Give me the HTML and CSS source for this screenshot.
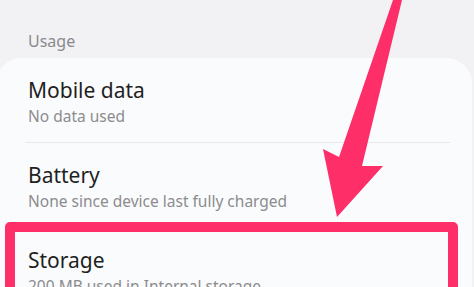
FILE: index.html
```html
<!DOCTYPE html>
<html>
<head>
<meta charset="utf-8">
<link rel="stylesheet" href="styles.css">
</head>
<body>
<div class="page">
  <div class="section-label">Usage</div>
  <div class="card">
    <div class="row">
      <div class="title">Mobile data</div>
      <div class="subtitle">No data used</div>
    </div>
    <div class="divider"></div>
    <div class="row">
      <div class="title">Battery</div>
      <div class="subtitle">None since device last fully charged</div>
    </div>
    <div class="divider"></div>
    <div class="row">
      <div class="title">Storage</div>
      <div class="subtitle">200 MB used in Internal storage</div>
    </div>
  </div>
  <div class="highlight"></div>
  <svg class="arrow" width="474" height="287" viewBox="0 0 474 287">
    <polygon points="393,0 402,0 362,166 383,166 337,217 323,149 339,157" fill="#fd2e68"/>
  </svg>
</div>
</body>
</html>
```
FILE: styles.css
```css
html, body {
  margin: 0;
  padding: 0;
  background: #f2f2f4;
  overflow: hidden;
}
.page {
  position: relative;
  width: 474px;
  height: 287px;
  overflow: hidden;
  font-family: "Noto Sans", "Open Sans", sans-serif;
}
.section-label {
  padding: 31px 0 0 28px;
  height: 20px;
  line-height: 20px;
  font-size: 16px;
  color: #8a8a8c;
  margin-bottom: 7px;
}
.card {
  margin-left: -4px;
  width: 476px;
  background: #fafbfd;
  border-radius: 26px 26px 0 0;
}
.row {
  height: 84px;
  box-sizing: border-box;
  padding: 19px 0 0 32px;
}
.title {
  font-size: 21px;
  line-height: 26px;
  color: #1f1f21;
}
.subtitle {
  margin-top: 3px;
  font-size: 15.5px;
  line-height: 20px;
  color: #8c8c8e;
  white-space: nowrap;
}
.divider {
  height: 1px;
  background: #e8e9eb;
  margin: 0 22px 0 29px;
}
.highlight {
  position: absolute;
  left: 5px;
  top: 222px;
  width: 453px;
  height: 90px;
  box-sizing: border-box;
  border: 10px solid #fd2e68;
  border-radius: 5px;
}
.arrow {
  position: absolute;
  left: 0;
  top: 0;
}
```
